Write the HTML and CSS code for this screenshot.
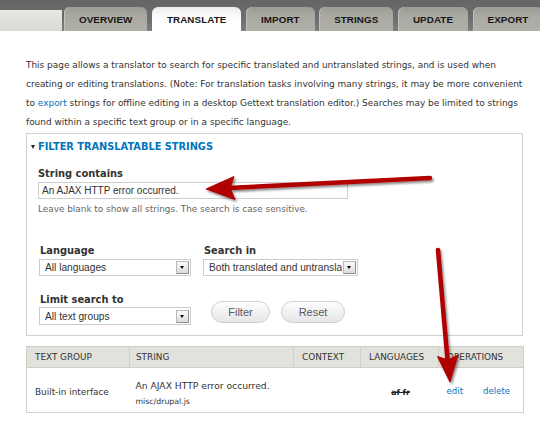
FILE: index.html
```html
<!DOCTYPE html>
<html>
<head>
<meta charset="utf-8">
<title>Translate</title>
<link rel="stylesheet" href="styles.css">
</head>
<body>
<div class="page">
  <div class="tabbar">
    <div class="tabbar-left"></div>
    <ul class="tabs">
      <li class="tab">OVERVIEW</li>
      <li class="tab active">TRANSLATE</li>
      <li class="tab">IMPORT</li>
      <li class="tab">STRINGS</li>
      <li class="tab">UPDATE</li>
      <li class="tab">EXPORT</li>
      <li class="tab tab-cut"></li>
    </ul>
  </div>

  <div class="content">
    <p class="intro">This page allows a translator to search for specific translated and untranslated strings, and is used when<br>
    creating or editing translations. (Note: For translation tasks involving many strings, it may be more convenient<br>
    to <a class="link" href="#">export</a> strings for offline editing in a desktop Gettext translation editor.) Searches may be limited to strings<br>
    found within a specific text group or in a specific language.</p>

    <div class="filter">
      <div class="legend"><span class="tri"></span>FILTER TRANSLATABLE STRINGS</div>

      <div class="label first">String contains</div>
      <div class="textinput">An AJAX HTTP error occurred.</div>
      <div class="help">Leave blank to show all strings. The search is case sensitive.</div>

      <div class="row row-one">
        <div class="field">
          <div class="label">Language</div>
          <div class="select"><span class="select-text">All languages</span><span class="select-btn"></span></div>
        </div>
        <div class="field">
          <div class="label">Search in</div>
          <div class="select wide"><span class="select-text">Both translated and untransla</span><span class="select-btn"></span></div>
        </div>
      </div>

      <div class="row row-two">
        <div class="field">
          <div class="label">Limit search to</div>
          <div class="select"><span class="select-text">All text groups</span><span class="select-btn"></span></div>
        </div>
        <div class="buttons">
          <span class="button filter-btn">Filter</span>
          <span class="button">Reset</span>
        </div>
      </div>
    </div>

    <table class="results">
      <thead>
        <tr>
          <th class="c-group">TEXT GROUP</th>
          <th class="c-string">STRING</th>
          <th class="c-context">CONTEXT</th>
          <th class="c-lang">LANGUAGES</th>
          <th class="c-ops">OPERATIONS</th>
        </tr>
      </thead>
      <tbody>
        <tr>
          <td class="c-group">Built-in interface</td>
          <td class="c-string"><div class="source">An AJAX HTTP error occurred.</div><div class="location">misc/drupal.js</div></td>
          <td class="c-context"></td>
          <td class="c-lang"><span class="langs">af fr</span></td>
          <td class="c-ops"><a class="link" href="#">edit</a><a class="link del" href="#">delete</a></td>
        </tr>
      </tbody>
    </table>
  </div>

  <svg class="arrows" width="540" height="431" viewBox="0 0 540 431">
    <defs>
      <filter id="shadow" x="-20%" y="-20%" width="140%" height="140%">
        <feDropShadow dx="1.5" dy="2" stdDeviation="1.3" flood-color="#000" flood-opacity="0.45"/>
      </filter>
    </defs>
    <g filter="url(#shadow)" fill="#b10000" stroke="#b10000">
      <line x1="430" y1="178" x2="228" y2="188" stroke-width="4.5" stroke-linecap="round"/>
      <polygon points="206,189 234,176.5 230,188 235,199.5" stroke-width="1" stroke-linejoin="round"/>
      <line x1="438" y1="250" x2="447.5" y2="360" stroke-width="4.5" stroke-linecap="round"/>
      <polygon points="450,382 437.5,356.5 448,360 458,355" stroke-width="1" stroke-linejoin="round"/>
    </g>
  </svg>
</div>
</body>
</html>
```

FILE: styles.css
```css
html, body {
  margin: 0;
  padding: 0;
  background: #ffffff;
}

body {
  font-family: "DejaVu Sans", Verdana, sans-serif;
  color: #333333;
}

.page {
  position: relative;
  width: 540px;
  height: 431px;
  overflow: hidden;
}

/* ---------- tabs ---------- */
.tabbar {
  height: 31px;
  background: linear-gradient(#666666 0, #6c6c6c 18px, #7e7e7e 31px);
  display: flex;
  align-items: flex-end;
}

.tabbar-left {
  flex: none;
  width: 62px;
  height: 21px;
  margin-right: 2px;
  background: linear-gradient(#e9e9e4, #d9d9d2);
}

.tabs {
  flex: none;
  display: flex;
  align-items: flex-end;
  gap: 4.5px;
  margin: 0;
  padding: 0;
  list-style: none;
}

.tab {
  flex: none;
  box-sizing: border-box;
  height: 24px;
  padding: 3px 15px 0;
  line-height: 20px;
  font-family: "Liberation Sans", Arial, sans-serif;
  font-weight: bold;
  font-size: 9.8px;
  letter-spacing: 0.1px;
  color: #161616;
  border-radius: 6px 6px 0 0;
  background: linear-gradient(#9c9c95, #aaaaa2 40%, #b0b0a8);
  box-shadow: inset 1px 0 0 #c2c2ba;
}

.tab.active {
  background: linear-gradient(#ececec, #ffffff 50%);
  box-shadow: none;
}

.tab-cut {
  width: 20px;
  padding: 0;
}

/* ---------- content ---------- */
.content {
  padding: 0 17px 0 26px;
}

.intro {
  margin: 25px -17px 0 0;
  font-size: 8.95px;
  line-height: 19px;
  white-space: nowrap;
  color: #333333;
}

.link {
  color: #0074bd;
  text-decoration: none;
}

.filter {
  margin-top: 1px;
  border: 1px solid #d2d2d2;
  padding: 7px 11px 10px 11px;
}

.legend {
  display: flex;
  align-items: center;
  margin-left: -7px;
  font-weight: bold;
  font-size: 9.8px;
  line-height: 12px;
  color: #0074bd;
}

.tri {
  width: 0;
  height: 0;
  border-top: 4px solid #222;
  border-left: 2.5px solid transparent;
  border-right: 2.5px solid transparent;
  margin-right: 3px;
}

.label {
  font-weight: bold;
  font-size: 9.9px;
  line-height: 12px;
  color: #333;
  margin-bottom: 2px;
}

.label.first {
  margin-top: 15px;
}

.textinput {
  box-sizing: border-box;
  width: 310px;
  height: 17px;
  border: 1px solid #cfcfcf;
  padding-left: 3px;
  font-family: "Liberation Sans", Arial, sans-serif;
  font-size: 10px;
  line-height: 15px;
  color: #333;
}

.help {
  margin-top: 4px;
  font-size: 8.9px;
  line-height: 12px;
  color: #666;
}

.row {
  display: flex;
  align-items: flex-end;
}

.row-one {
  margin-top: 30px;
}

.row-two {
  margin-top: 18px;
}

.field {
  flex: none;
  width: 164px;
  padding-left: 1px;
  box-sizing: border-box;
}

.field .label {
  padding-left: 1px;
}

.row-two .label {
  margin-bottom: 1px;
}

.select {
  box-sizing: border-box;
  width: 152px;
  height: 17px;
  border: 1px solid #cccccc;
  display: flex;
  align-items: center;
  justify-content: space-between;
  padding: 0 1px 0 5px;
  font-family: "Liberation Sans", Arial, sans-serif;
  font-size: 10.2px;
  color: #333;
  background: #fff;
}

.row-two .select {
  height: 18px;
}

.select.wide {
  width: 155px;
  padding-left: 5px;
}

.select-text {
  white-space: nowrap;
  overflow: hidden;
}

.select-btn {
  position: relative;
  flex: none;
  box-sizing: border-box;
  width: 13px;
  height: 13px;
  border: 1px solid #b9b9b9;
  border-right-color: #8e8e8e;
  border-bottom-color: #8e8e8e;
  background: linear-gradient(#fafafa, #dcdcdc);
}

.select-btn::after {
  content: "";
  position: absolute;
  left: 3px;
  top: 4px;
  border-top: 3px solid #000;
  border-left: 2.5px solid transparent;
  border-right: 2.5px solid transparent;
}

.buttons {
  display: flex;
  gap: 11px;
  margin-left: 9px;
  margin-bottom: 2px;
}

.button {
  box-sizing: border-box;
  height: 22px;
  width: 59px;
  border: 1px solid #d0d0d0;
  border-radius: 11px;
  background: linear-gradient(#fdfdfd, #e6e6e6);
  font-family: "Liberation Sans", Arial, sans-serif;
  font-size: 11px;
  line-height: 20px;
  text-align: center;
  color: #5a5a5a;
}

.button + .button {
  width: 64px;
}

/* ---------- table ---------- */
.results {
  margin-top: 10px;
  width: 497px;
  border-collapse: collapse;
  table-layout: fixed;
  border: 1px solid #d0d0cc;
}

.results th {
  height: 21px;
  padding: 0 0 0 8px;
  box-sizing: border-box;
  background: #e2e2dc;
  border: 1px solid #cfcfc8;
  font-weight: normal;
  font-size: 8.85px;
  text-align: left;
  color: #333;
}

.results td {
  height: 45px;
  padding: 3px 0 0 8px;
  box-sizing: border-box;
  font-size: 8.9px;
  color: #333;
  vertical-align: middle;
}

.c-group { width: 103px; }
.c-string { width: 164px; }
.c-context { width: 67px; }
.c-lang { width: 78px; }
.c-ops { width: 85px; }

.results .c-string {
  padding-left: 6px;
}

.results td.c-string {
  padding-top: 7px;
}

.source {
  font-size: 9.2px;
  line-height: 12px;
}

.location {
  margin-top: 5px;
  font-size: 7.8px;
  line-height: 10px;
  color: #333;
}

.results td.c-lang {
  text-align: center;
  padding: 3px 0 0 0;
}

.langs {
  font-weight: bold;
  font-size: 7.8px;
  text-decoration: line-through;
  color: #222;
  margin-left: 2px;
}

.results td.c-ops {
  padding-left: 8px;
  padding-top: 1px;
  font-size: 8.6px;
}

.del {
  margin-left: 20px;
}

/* ---------- annotation overlay ---------- */
.arrows {
  position: absolute;
  left: 0;
  top: 0;
  pointer-events: none;
}
```
